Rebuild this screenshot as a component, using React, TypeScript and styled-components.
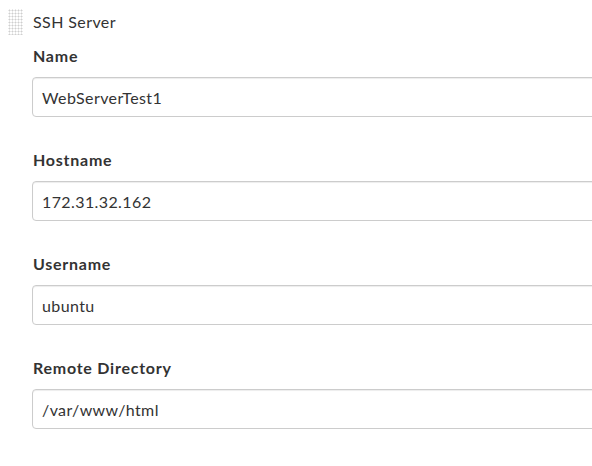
import React from "react";
import styled, { createGlobalStyle } from "styled-components";

const Global = createGlobalStyle`
  html, body { margin: 0; padding: 0; background: #fff; overflow: hidden; }
  body { font-family: Lato, "Open Sans", sans-serif; color: #333; }
`;

const Page = styled.div`
  width: 592px;
  height: 466px;
  overflow: hidden;
  padding-top: 8px;
  box-sizing: border-box;
`;

const Header = styled.div`
  display: flex;
  align-items: flex-start;
  height: 28px;
`;

const Grip = styled.div`
  width: 15px;
  height: 26px;
  margin-left: 8px;
  margin-right: 10px;
  margin-top: 1px;
  background-image: radial-gradient(circle, #cfcfcf 0.9px, transparent 1.1px);
  background-size: 3px 3px;
`;

const Title = styled.div`
  font-size: 16px;
  line-height: 28px;
  letter-spacing: 0.4px;
`;

const Fields = styled.div`
  padding-left: 32px;
  display: flex;
  flex-direction: column;
`;

const Field = styled.div`
  display: flex;
  flex-direction: column;
  margin-bottom: 23px;
`;

const Label = styled.label`
  font-weight: 700;
  font-size: 16px;
  line-height: 22px;
  letter-spacing: 0.75px;
  margin: 9px 0 10px 1px;
`;

const Input = styled.div`
  width: 600px;
  height: 40px;
  box-sizing: border-box;
  border: 1px solid #cccccc;
  border-radius: 4px;
  padding: 0 9px;
  font-size: 16px;
  letter-spacing: 0.4px;
  display: flex;
  align-items: center;
  color: #333;
  box-shadow: inset 0 1px 1px rgba(0,0,0,0.075);
`;

const fields = [
  ["Name", "WebServerTest1"],
  ["Hostname", "172.31.32.162"],
  ["Username", "ubuntu"],
  ["Remote Directory", "/var/www/html"],
];

export default function App() {
  return (
    <Page>
      <Global />
      <Header>
        <Grip />
        <Title>SSH Server</Title>
      </Header>
      <Fields>
        {fields.map(([l, v]) => (
          <Field key={l}>
            <Label>{l}</Label>
            <Input>{v}</Input>
          </Field>
        ))}
      </Fields>
    </Page>
  );
}
